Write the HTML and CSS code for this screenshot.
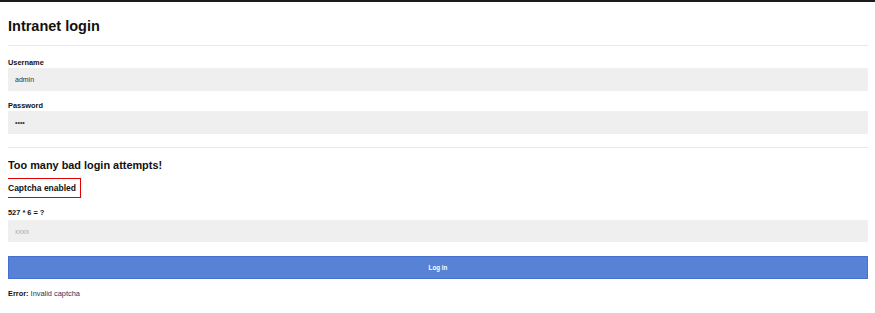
FILE: index.html
```html
<!DOCTYPE html>
<html>
<head>
    <title>Intranet login</title>
    <link rel="stylesheet" href="styles.css">
</head>
<body>
    <h1>Intranet login</h1>
    <hr class="sep">
    <form class="login-form">
        <label class="field-label" for="username">Username</label>
        <input class="field-input" id="username" type="text" value="admin">

        <label class="field-label" for="password">Password</label>
        <input class="field-input" id="password" type="password" value="1234">

        <hr class="sep sep-low">

        <h2 class="warning">Too many bad login attempts!</h2>
        <div class="captcha-row">
            <span class="captcha-note">Captcha enabled</span>
        </div>

        <label class="field-label captcha-label" for="captcha">527 * 6 = ?</label>
        <input class="field-input" id="captcha" type="text" placeholder="xxxx">

        <button class="login-btn" type="button">Log in</button>
    </form>
    <p class="error"><b>Error:</b> <span class="error-msg">Invalid captcha</span></p>
</body>
</html>
```

FILE: styles.css
```css
html {
    border-top: 2px solid #1b1b1b;
}

body {
    margin: 0 7px 0 8px;
    font-family: "Liberation Sans", Arial, sans-serif;
    color: #111;
    background-color: #fff;
}

h1 {
    margin: 16px 0 10px;
    font-size: 14.5px;
    line-height: 17px;
    color: #111;
}

.sep {
    border: 0;
    height: 1px;
    margin: 0;
    background-color: #e8e8e8;
}

.sep-low {
    margin-top: 13.8px;
}

.login-form {
    margin: 0;
    padding-top: 12px;
}

.field-label {
    display: block;
    font-size: 7.4px;
    line-height: 10px;
    font-weight: bold;
    color: #111;
    margin-bottom: 0;
}

.field-input {
    display: block;
    box-sizing: border-box;
    width: 100%;
    height: 22.5px;
    margin: 0 0 10.5px;
    padding: 0 7px;
    border: 0;
    background-color: #efefef;
    font-family: "Liberation Sans", Arial, sans-serif;
    font-size: 7px;
    color: #333;
    outline: none;
}

.field-input::placeholder {
    color: #aaa;
}

.warning {
    margin: 11px 0 5px;
    font-size: 10.9px;
    line-height: 13px;
    color: #111;
}

.captcha-row {
    height: 18px;
    margin-bottom: 13.2px;
}

.captcha-note {
    display: inline-block;
    font-size: 8.5px;
    line-height: 18px;
    font-weight: bold;
    padding-right: 3.5px;
    outline: 1.4px solid #e30000;
}

.captcha-label {
    margin-bottom: 1.4px;
}

.login-btn {
    display: block;
    box-sizing: border-box;
    width: 100%;
    height: 23.3px;
    margin-top: 13.2px;
    border: 1px solid #4670cf;
    background-color: #5782d6;
    color: #fff;
    font-family: "Liberation Sans", Arial, sans-serif;
    font-size: 6.3px;
    font-weight: bold;
    padding: 0;
}

.error {
    margin: 10px 0 0;
    font-size: 7.4px;
    line-height: 10px;
}

.error-msg {
    color: #24365e;
}
```
